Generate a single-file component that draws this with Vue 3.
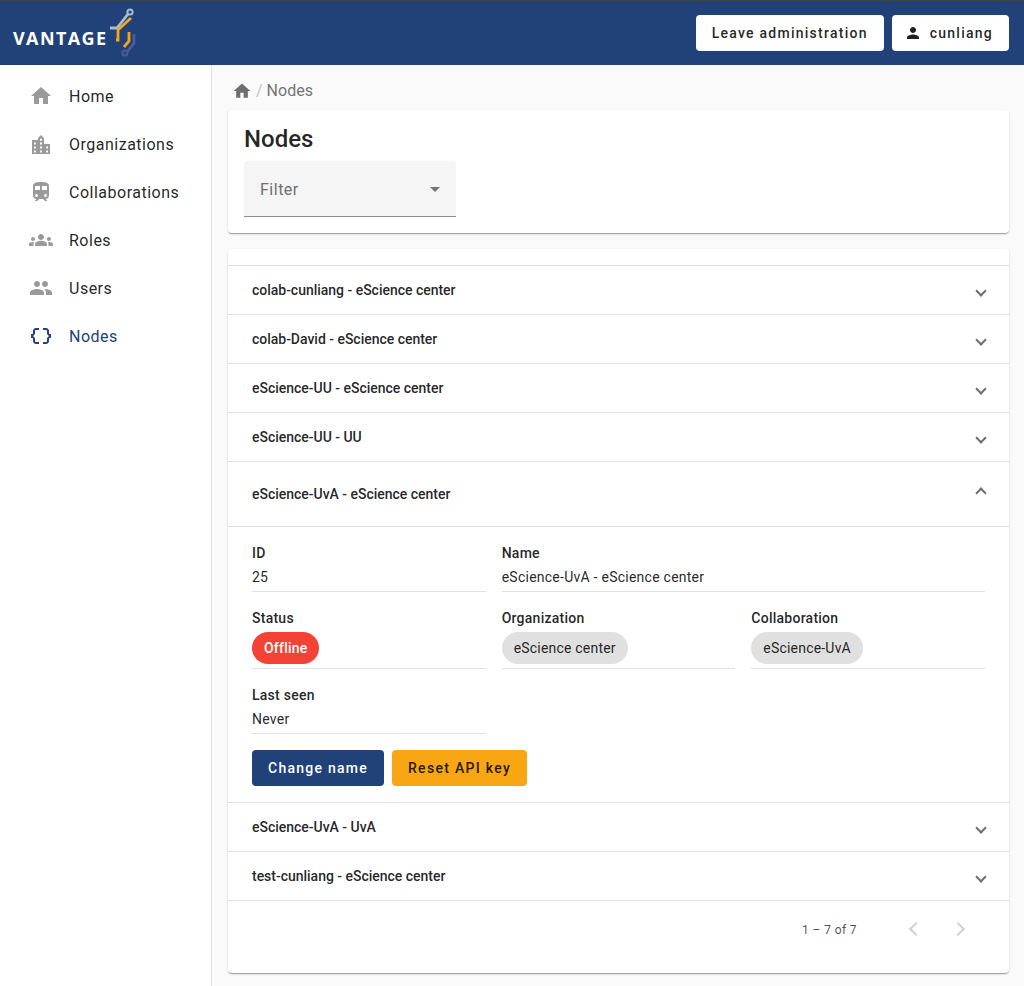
<script setup>
const before = ['colab-cunliang - eScience center', 'colab-David - eScience center', 'eScience-UU - eScience center', 'eScience-UU - UU']
const after = ['eScience-UvA - UvA', 'test-cunliang - eScience center']
const nav = [
  { label: 'Home', d: 'M10 20v-6h4v6h5v-8h3L12 3 2 12h3v8z' },
  { label: 'Organizations', d: 'M3 8h6V6l3-3 3 3v6h6v10H3zM5 10.500v2h1.800v-2zM5 14.500v2h1.800v-2zM5 18.500v2h1.800v-2zM11 6.800v2h2v-2zM11 10.500v2h2v-2zM11 14.500v2h2v-2zM11 18.500v2h2v-2zM17.200 14.500v2H19v-2zM17.200 18.500v2H19v-2z' },
  { label: 'Collaborations', d: 'M12 2c-4 0-8 .5-8 4v9.5C4 17.43 5.57 19 7.5 19L6 20.5v.5h2.23l2-2H14l2 2h2v-.5L16.5 19c1.93 0 3.5-1.57 3.5-3.5V6c0-3.5-3.58-4-8-4zM7.500 17c-.83 0-1.500-.67-1.500-1.500S6.670 14 7.500 14s1.500.67 1.500 1.500S8.330 17 7.500 17zm3.500-7H6V6h5v4zm2 0V6h5v4h-5zm3.500 7c-.83 0-1.500-.67-1.500-1.500s.67-1.500 1.500-1.500 1.500.67 1.500 1.500-.67 1.500-1.500 1.500z' },
  { label: 'Roles', d: 'M12 12.75c1.63 0 3.07.39 4.24.9 1.08.48 1.76 1.56 1.76 2.73V18H6v-1.61c0-1.18.68-2.26 1.76-2.73 1.17-.52 2.61-.91 4.24-.91zM4 13c1.1 0 2-.9 2-2s-.9-2-2-2-2 .9-2 2 .9 2 2 2zm1.130 1.100c-.37-.06-.74-.1-1.130-.1-.99 0-1.930.21-2.780.58C.48 14.900 0 15.620 0 16.430V18h4.500v-1.610c0-.83.23-1.610.63-2.290zM20 13c1.100 0 2-.9 2-2s-.9-2-2-2-2 .9-2 2 .9 2 2 2zm4 3.430c0-.81-.48-1.530-1.220-1.850-.85-.37-1.790-.58-2.780-.58-.39 0-.76.04-1.130.1.4.68.63 1.460.63 2.290V18H24v-1.570zM12 6c1.660 0 3 1.340 3 3s-1.340 3-3 3-3-1.340-3-3 1.340-3 3-3z' },
  { label: 'Users', d: 'M16 11c1.660 0 2.990-1.340 2.990-3S17.660 5 16 5s-3 1.340-3 3 1.340 3 3 3zm-8 0c1.660 0 2.990-1.340 2.990-3S9.660 5 8 5 5 6.340 5 8s1.340 3 3 3zm0 2c-2.330 0-7 1.170-7 3.500V19h14v-2.500c0-2.330-4.670-3.500-7-3.500zm8 0c-.29 0-.62.02-.97.05 1.160.84 1.970 1.970 1.970 3.450V19h6v-2.500c0-2.330-4.670-3.500-7-3.500z' },
  { label: 'Nodes', active: true, d: 'M4 7v2c0 .55-.45 1-1 1H2v4h1c.55 0 1 .45 1 1v2c0 1.650 1.350 3 3 3h3v-2H7c-.55 0-1-.45-1-1v-2c0-1.300-.84-2.420-2-2.830v-.34C5.160 11.420 6 10.300 6 9V7c0-.55.45-1 1-1h3V4H7C5.350 4 4 5.350 4 7zm17 3c-.55 0-1-.45-1-1V7c0-1.650-1.350-3-3-3h-3v2h3c.55 0 1 .45 1 1v2c0 1.300.84 2.420 2 2.830v.34c-1.160.41-2 1.520-2 2.830v2c0 .55-.45 1-1 1h-3v2h3c1.650 0 3-1.350 3-3v-2c0-.55.45-1 1-1h1v-4h-1z' }
]
</script>

<template>
  <div class="page">
    <header class="topbar">
      <div class="logo">
        <span class="logo-text">VANTAGE</span>
        <svg class="logo-mark" width="30" height="52" viewBox="0 0 30 52" fill="none">
          <path d="M1 20h7L19 6" stroke="#a9bdd0" stroke-width="2.800" />
          <circle cx="21" cy="4" r="2.600" stroke="#a9bdd0" stroke-width="2" />
          <path d="M22 10 9 22v10H7" stroke="#f7a516" stroke-width="2.800" />
          <path d="M20 24v9l-5 6" stroke="#f7a516" stroke-width="2.800" />
          <path d="M25 26v9l-7 9" stroke="#4a5b9b" stroke-width="2.800" />
          <circle cx="16" cy="45" r="2.600" stroke="#4a5b9b" stroke-width="2" />
        </svg>
      </div>
      <div class="top-actions">
        <button class="btn btn-white">Leave administration</button>
        <button class="btn btn-white btn-user">
          <svg width="18" height="18" viewBox="0 0 24 24"><path fill="currentColor" d="M12 12c2.210 0 4-1.790 4-4s-1.790-4-4-4-4 1.790-4 4 1.790 4 4 4zm0 2c-2.670 0-8 1.340-8 4v2h16v-2c0-2.660-5.330-4-8-4z" /></svg>
          <span>cunliang</span>
        </button>
      </div>
    </header>

    <div class="body">
      <nav class="sidebar">
        <a v-for="item in nav" :key="item.label" class="nav-item" :class="{ active: item.active }">
          <svg width="24" height="24" viewBox="0 0 24 24"><path fill="currentColor" :d="item.d" /></svg>
          <span>{{ item.label }}</span>
        </a>
      </nav>

      <main class="main">
        <div class="crumbs">
          <svg width="20" height="20" viewBox="0 0 24 24"><path fill="currentColor" d="M10 20v-6h4v6h5v-8h3L12 3 2 12h3v8z" /></svg>
          <span class="sep">/</span>
          <span>Nodes</span>
        </div>

        <section class="card head-card">
          <h1>Nodes</h1>
          <div class="filter">
            <span>Filter</span>
            <i class="caret"></i>
          </div>
        </section>

        <section class="card list-card">
          <div class="list-top"></div>
          <div v-for="row in before" :key="row" class="row">
            <span>{{ row }}</span>
            <i class="chev"></i>
          </div>
          <div class="row row-open">
            <span>eScience-UvA - eScience center</span>
            <i class="chev up"></i>
          </div>
          <div class="details">
            <div class="grid">
              <div class="field">
                <label>ID</label>
                <div class="value">25</div>
              </div>
              <div class="field span2">
                <label>Name</label>
                <div class="value">eScience-UvA - eScience center</div>
              </div>
              <div class="field chipf">
                <label>Status</label>
                <div class="value"><span class="chip red">Offline</span></div>
              </div>
              <div class="field chipf">
                <label>Organization</label>
                <div class="value"><span class="chip">eScience center</span></div>
              </div>
              <div class="field chipf">
                <label>Collaboration</label>
                <div class="value"><span class="chip">eScience-UvA</span></div>
              </div>
              <div class="field">
                <label>Last seen</label>
                <div class="value">Never</div>
              </div>
            </div>
            <div class="actions">
              <button class="btn btn-primary">Change name</button>
              <button class="btn btn-accent">Reset API key</button>
            </div>
          </div>
          <div v-for="row in after" :key="row" class="row">
            <span>{{ row }}</span>
            <i class="chev"></i>
          </div>
          <div class="pager">
            <span class="range">1 – 7 of 7</span>
            <i class="pg left"></i>
            <i class="pg right"></i>
          </div>
        </section>
      </main>
    </div>
  </div>
</template>

<style>
html, body { margin: 0; background: #fafafa; }
</style>

<style scoped>
.page { font-family: Roboto, "Liberation Sans", sans-serif; color: rgba(0,0,0,.87); height: 986px; overflow: hidden; display: flex; flex-direction: column; }
.topbar { height: 64px; border-top: 1px solid #444; background: #204279; display: flex; align-items: center; justify-content: space-between; padding: 0 15px 0 13px; box-sizing: content-box; flex: none; }
.logo { position: relative; width: 130px; height: 64px; }
.logo-text { font-family: "Open Sans", sans-serif; font-weight: 700; font-size: 18px; letter-spacing: 1.400px; color: #fff; position: absolute; left: 0; top: 25px; line-height: 24px; }
.logo-mark { position: absolute; left: 96px; top: 7px; }
.top-actions { display: flex; gap: 8px; }
.btn { height: 36px; border: 0; border-radius: 4px; padding: 0 16px; font: 500 14px Roboto, sans-serif; letter-spacing: 1.250px; cursor: pointer; }
.btn-white { background: #fff; color: rgba(0,0,0,.87); }
.btn-user { display: flex; align-items: center; gap: 8px; padding-left: 12px; }
.body { display: flex; flex: 1; min-height: 0; }
.sidebar { width: 211px; background: #fff; border-right: 1px solid #e0e0e0; flex: none; padding-top: 7px; box-sizing: content-box; }
.nav-item { height: 48px; display: flex; align-items: center; gap: 16px; padding-left: 29px; font-size: 16px; letter-spacing: .5px; color: rgba(0,0,0,.87); }
.nav-item svg { color: #9a9a9a; flex: none; }
.nav-item.active, .nav-item.active svg { color: #204279; }
.main { flex: 1; padding: 0 15px 0 16px; min-width: 0; }
.crumbs { height: 45px; display: flex; align-items: center; gap: 4px; font-size: 16px; color: #757575; padding-left: 4px; box-sizing: border-box; padding-top: 6px; }
.crumbs svg { color: #6e6e6e; }
.sep { color: #c4c4c4; }
.card { background: #fff; border-radius: 4px; box-shadow: 0 2px 1px -1px rgba(0,0,0,.2), 0 1px 1px 0 rgba(0,0,0,.14), 0 1px 3px 0 rgba(0,0,0,.12); }
.head-card { height: 123px; padding: 16px; box-sizing: border-box; margin-bottom: 16px; }
h1 { margin: 0 0 8px; font-size: 24px; line-height: 27px; font-weight: 500; letter-spacing: 0; }
.filter { width: 212px; height: 56px; background: #f5f5f5; border-radius: 4px 4px 0 0; border-bottom: 1px solid #8c8c8c; box-sizing: border-box; display: flex; align-items: center; justify-content: space-between; padding: 2px 16px 0; font-size: 16px; letter-spacing: .5px; color: #6f6f6f; }
.caret { width: 0; height: 0; border-left: 5px solid transparent; border-right: 5px solid transparent; border-top: 5px solid #757575; }
.list-card { height: 724px; overflow: hidden; }
.list-top { height: 16px; border-bottom: 1px solid #e0e0e0; }
.row { height: 48px; border-bottom: 1px solid #e0e0e0; display: flex; align-items: center; justify-content: space-between; padding: 0 24px; font-size: 14px; font-weight: 500; letter-spacing: -.02px; }
.row-open { height: 64px; }
.chev { width: 6px; height: 6px; border-right: 2px solid #6f6f6f; border-bottom: 2px solid #6f6f6f; transform: translateY(1px) rotate(45deg); box-sizing: content-box; }
.chev.up { transform: translateY(-1px) rotate(225deg); }
.details { height: 276px; box-sizing: border-box; padding: 16px 24px; border-bottom: 1px solid #e0e0e0; }
.grid { display: grid; grid-template-columns: repeat(3, 233.670px); column-gap: 16px; }
.span2 { grid-column: span 2; }
.field { height: 48px; margin-bottom: 16px; border-bottom: 1px solid #e0e0e0; box-sizing: content-box; }
.chipf { height: 60px; }
.field:nth-child(n+6) { margin-bottom: 0; }
label { display: block; font-size: 14px; font-weight: 500; line-height: 20px; letter-spacing: .25px; }
.value { font-size: 14px; line-height: 20px; letter-spacing: .25px; margin-top: 4px; display: flex; }
.chip { display: block; height: 32px; line-height: 32px; border-radius: 16px; background: #e0e0e0; padding: 0 12px; color: rgba(0,0,0,.87); letter-spacing: .2px; }
.chip.red { background: #f44336; color: #fff; font-weight: 500; }
.actions { display: flex; gap: 8px; margin-top: 16px; }
.btn-primary { background: #204279; color: #fff; }
.btn-accent { background: #f9a614; color: rgba(0,0,0,.87); letter-spacing: 1.300px; }
.pager { height: 56px; display: flex; align-items: center; justify-content: flex-end; font-size: 12px; letter-spacing: .4px; color: rgba(0,0,0,.7); padding-right: 24px; }
.range { margin-right: 32px; padding-top: 1px; }
.pg { display: block; width: 48px; position: relative; height: 20px; }
.pg::after { content: ""; position: absolute; left: 22px; top: 5px; width: 8px; height: 8px; border-left: 2px solid #d0d0d0; border-bottom: 2px solid #d0d0d0; transform: rotate(45deg); }
.pg.right::after { transform: rotate(225deg); left: 16px; }
</style>
